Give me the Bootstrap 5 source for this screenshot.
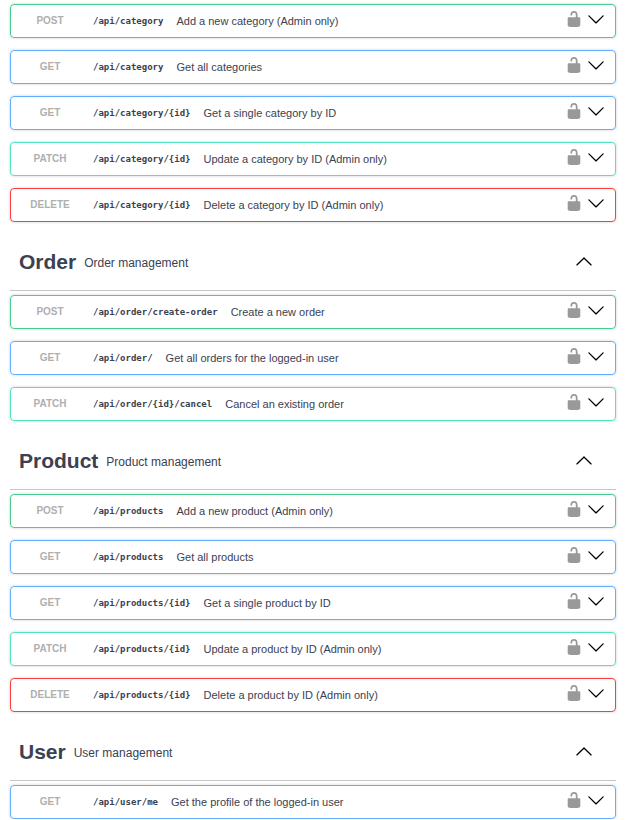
<!DOCTYPE html>
<html lang="en">
<head>
<meta charset="utf-8">
<meta name="viewport" content="width=device-width, initial-scale=1">
<title>API operations</title>
<link href="https://cdn.jsdelivr.net/npm/bootstrap@5.3.0/dist/css/bootstrap.min.css" rel="stylesheet">
<style>
  body { font-family: "Liberation Sans", Arial, sans-serif; font-size: 11px; line-height: 16px; color: #3b4151; background: #fff; }
  main { padding: 4px 26px 0 10px; }
  .op-list { display: grid; gap: 12px; }
  .op { height: 34px; border: 1px solid var(--op); border-radius: 4px; box-shadow: 0 0 3px rgba(0, 0, 0, .19); padding-right: 10px; }
  .op-post { --op: #49cc90; }
  .op-get { --op: #61affe; }
  .op-patch { --op: #50e3c2; }
  .op-delete { --op: #f93e3e; }
  button { background: none; border: 0; padding: 0; color: inherit; }
  .op-method { width: 78px; font-size: 10px; font-weight: 700; color: #afafaf; text-align: center; }
  .op-path { font-family: "DejaVu Sans Mono", monospace; font-size: 9px; font-weight: 700; margin: 0 13px 0 4px; }
  .op svg, .tag-head svg { width: 18px; height: 18px; display: block; }
  .op-lock { color: #999; margin-right: 4px; }
  .op-lock, .op-toggle { margin-bottom: 5px; }
  .op-toggle, .tag-toggle { color: #000; }
  .tag-head { height: 69px; margin-bottom: 4px; padding: 12px 23px 0 9px; border-bottom: 1px solid #c4c6ca; }
  .tag-toggle { margin-bottom: 2px; }
  .tag-name { font-size: 21px; line-height: 24px; font-weight: 700; margin: 0 8px 0 0; }
  .tag-name a { color: inherit; text-decoration: none; }
  .tag-note { font-size: 12px; margin: 2px 0 0; }
</style>
<script src="https://cdn.jsdelivr.net/npm/bootstrap@5.3.0/dist/js/bootstrap.bundle.min.js"></script>
</head>
<body>
<svg class="d-none" aria-hidden="true">
  <symbol id="unlocked" viewBox="0 0 20 20"><path fill="currentColor" d="M15.8 8H14V5.6C14 2.703 12.665 1 10 1 7.334 1 6 2.703 6 5.6V6h2v-.801C8 3.754 8.797 3 10 3c1.203 0 2 .754 2 2.199V8H4c-.553 0-1 .646-1 1.199V17c0 .549.428 1.139.951 1.307l1.197.387C5.672 18.861 6.55 19 7.1 19h5.8c.549 0 1.428-.139 1.951-.307l1.196-.387c.524-.167.953-.757.953-1.306V9.199C17 8.646 16.352 8 15.8 8z"/></symbol>
  <symbol id="arrow-down" viewBox="0 0 20 20"><path fill="currentColor" d="M17.418 6.109c.272-.268.709-.268.979 0s.271.701 0 .969l-7.908 7.83c-.27.268-.707.268-.979 0l-7.908-7.83c-.27-.268-.27-.701 0-.969.271-.268.709-.268.979 0L10 13.25z"/></symbol>
  <symbol id="arrow-up" viewBox="0 0 20 20"><path fill="currentColor" d="M17.418 14.908c.272.27.709.27.979 0s.271-.701 0-.969l-7.908-7.83c-.27-.268-.707-.268-.979 0l-7.908 7.83c-.27.268-.27.701 0 .969.271.268.709.268.979 0L10 7.767z"/></symbol>
</svg>
<main>
  <section class="op-list" aria-label="Category">
    <div class="op op-post d-flex align-items-center"><button type="button" class="d-flex align-items-center flex-grow-1 text-start"><span class="op-method">POST</span><span class="op-path">/api/category</span><span>Add a new category (Admin only)</span></button><button type="button" class="op-lock" aria-label="Authorize"><svg><use href="#unlocked"/></svg></button><button type="button" class="op-toggle" aria-label="Expand operation"><svg><use href="#arrow-down"/></svg></button></div>
    <div class="op op-get d-flex align-items-center"><button type="button" class="d-flex align-items-center flex-grow-1 text-start"><span class="op-method">GET</span><span class="op-path">/api/category</span><span>Get all categories</span></button><button type="button" class="op-lock" aria-label="Authorize"><svg><use href="#unlocked"/></svg></button><button type="button" class="op-toggle" aria-label="Expand operation"><svg><use href="#arrow-down"/></svg></button></div>
    <div class="op op-get d-flex align-items-center"><button type="button" class="d-flex align-items-center flex-grow-1 text-start"><span class="op-method">GET</span><span class="op-path">/api/category/{id}</span><span>Get a single category by ID</span></button><button type="button" class="op-lock" aria-label="Authorize"><svg><use href="#unlocked"/></svg></button><button type="button" class="op-toggle" aria-label="Expand operation"><svg><use href="#arrow-down"/></svg></button></div>
    <div class="op op-patch d-flex align-items-center"><button type="button" class="d-flex align-items-center flex-grow-1 text-start"><span class="op-method">PATCH</span><span class="op-path">/api/category/{id}</span><span>Update a category by ID (Admin only)</span></button><button type="button" class="op-lock" aria-label="Authorize"><svg><use href="#unlocked"/></svg></button><button type="button" class="op-toggle" aria-label="Expand operation"><svg><use href="#arrow-down"/></svg></button></div>
    <div class="op op-delete d-flex align-items-center"><button type="button" class="d-flex align-items-center flex-grow-1 text-start"><span class="op-method">DELETE</span><span class="op-path">/api/category/{id}</span><span>Delete a category by ID (Admin only)</span></button><button type="button" class="op-lock" aria-label="Authorize"><svg><use href="#unlocked"/></svg></button><button type="button" class="op-toggle" aria-label="Expand operation"><svg><use href="#arrow-down"/></svg></button></div>
  </section>

  <header class="tag-head d-flex align-items-center"><h3 class="tag-name"><a href="#order">Order</a></h3><p class="tag-note flex-grow-1">Order management</p><button type="button" class="tag-toggle" aria-label="Collapse Order"><svg><use href="#arrow-up"/></svg></button></header>
  <section class="op-list" id="order">
    <div class="op op-post d-flex align-items-center"><button type="button" class="d-flex align-items-center flex-grow-1 text-start"><span class="op-method">POST</span><span class="op-path">/api/order/create-order</span><span>Create a new order</span></button><button type="button" class="op-lock" aria-label="Authorize"><svg><use href="#unlocked"/></svg></button><button type="button" class="op-toggle" aria-label="Expand operation"><svg><use href="#arrow-down"/></svg></button></div>
    <div class="op op-get d-flex align-items-center"><button type="button" class="d-flex align-items-center flex-grow-1 text-start"><span class="op-method">GET</span><span class="op-path">/api/order/</span><span>Get all orders for the logged-in user</span></button><button type="button" class="op-lock" aria-label="Authorize"><svg><use href="#unlocked"/></svg></button><button type="button" class="op-toggle" aria-label="Expand operation"><svg><use href="#arrow-down"/></svg></button></div>
    <div class="op op-patch d-flex align-items-center"><button type="button" class="d-flex align-items-center flex-grow-1 text-start"><span class="op-method">PATCH</span><span class="op-path">/api/order/{id}/cancel</span><span>Cancel an existing order</span></button><button type="button" class="op-lock" aria-label="Authorize"><svg><use href="#unlocked"/></svg></button><button type="button" class="op-toggle" aria-label="Expand operation"><svg><use href="#arrow-down"/></svg></button></div>
  </section>

  <header class="tag-head d-flex align-items-center"><h3 class="tag-name"><a href="#product">Product</a></h3><p class="tag-note flex-grow-1">Product management</p><button type="button" class="tag-toggle" aria-label="Collapse Product"><svg><use href="#arrow-up"/></svg></button></header>
  <section class="op-list" id="product">
    <div class="op op-post d-flex align-items-center"><button type="button" class="d-flex align-items-center flex-grow-1 text-start"><span class="op-method">POST</span><span class="op-path">/api/products</span><span>Add a new product (Admin only)</span></button><button type="button" class="op-lock" aria-label="Authorize"><svg><use href="#unlocked"/></svg></button><button type="button" class="op-toggle" aria-label="Expand operation"><svg><use href="#arrow-down"/></svg></button></div>
    <div class="op op-get d-flex align-items-center"><button type="button" class="d-flex align-items-center flex-grow-1 text-start"><span class="op-method">GET</span><span class="op-path">/api/products</span><span>Get all products</span></button><button type="button" class="op-lock" aria-label="Authorize"><svg><use href="#unlocked"/></svg></button><button type="button" class="op-toggle" aria-label="Expand operation"><svg><use href="#arrow-down"/></svg></button></div>
    <div class="op op-get d-flex align-items-center"><button type="button" class="d-flex align-items-center flex-grow-1 text-start"><span class="op-method">GET</span><span class="op-path">/api/products/{id}</span><span>Get a single product by ID</span></button><button type="button" class="op-lock" aria-label="Authorize"><svg><use href="#unlocked"/></svg></button><button type="button" class="op-toggle" aria-label="Expand operation"><svg><use href="#arrow-down"/></svg></button></div>
    <div class="op op-patch d-flex align-items-center"><button type="button" class="d-flex align-items-center flex-grow-1 text-start"><span class="op-method">PATCH</span><span class="op-path">/api/products/{id}</span><span>Update a product by ID (Admin only)</span></button><button type="button" class="op-lock" aria-label="Authorize"><svg><use href="#unlocked"/></svg></button><button type="button" class="op-toggle" aria-label="Expand operation"><svg><use href="#arrow-down"/></svg></button></div>
    <div class="op op-delete d-flex align-items-center"><button type="button" class="d-flex align-items-center flex-grow-1 text-start"><span class="op-method">DELETE</span><span class="op-path">/api/products/{id}</span><span>Delete a product by ID (Admin only)</span></button><button type="button" class="op-lock" aria-label="Authorize"><svg><use href="#unlocked"/></svg></button><button type="button" class="op-toggle" aria-label="Expand operation"><svg><use href="#arrow-down"/></svg></button></div>
  </section>

  <header class="tag-head d-flex align-items-center"><h3 class="tag-name"><a href="#user">User</a></h3><p class="tag-note flex-grow-1">User management</p><button type="button" class="tag-toggle" aria-label="Collapse User"><svg><use href="#arrow-up"/></svg></button></header>
  <section class="op-list" id="user">
    <div class="op op-get d-flex align-items-center"><button type="button" class="d-flex align-items-center flex-grow-1 text-start"><span class="op-method">GET</span><span class="op-path">/api/user/me</span><span>Get the profile of the logged-in user</span></button><button type="button" class="op-lock" aria-label="Authorize"><svg><use href="#unlocked"/></svg></button><button type="button" class="op-toggle" aria-label="Expand operation"><svg><use href="#arrow-down"/></svg></button></div>
  </section>
</main>
</body>
</html>
